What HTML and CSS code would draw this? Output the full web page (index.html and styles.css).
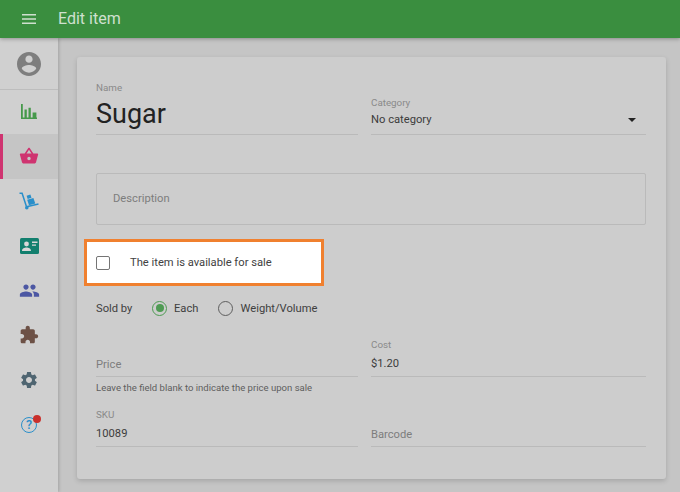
FILE: index.html
```html
<!DOCTYPE html>
<html lang="en">
<head>
<meta charset="utf-8">
<title>Edit item</title>
<link rel="stylesheet" href="styles.css">
</head>
<body>
<div class="app">
  <header class="topbar">
    <svg class="menu-icon" viewBox="0 0 14 10" width="14" height="10"><path d="M0 0h14v1.600H0zM0 4.200h14v1.600H0zM0 8.400h14V10H0z"/></svg>
    <h1 class="title">Edit item</h1>
  </header>
  <div class="content">
    <nav class="sidebar">
      <div class="avatar">
        <svg viewBox="2 2 20 20" width="24" height="24"><path fill="#7e7e7e" d="M12 2C6.480 2 2 6.480 2 12s4.480 10 10 10 10-4.480 10-10S17.520 2 12 2zm0 3c1.660 0 3 1.340 3 3s-1.340 3-3 3-3-1.340-3-3 1.340-3 3-3zm0 14.200c-2.500 0-4.710-1.280-6-3.220.03-1.990 4-3.080 6-3.080 1.990 0 5.970 1.090 6 3.080-1.290 1.940-3.500 3.220-6 3.220z"/></svg>
      </div>
      <div class="nav-item first">
        <svg viewBox="0 0 16 16" width="16" height="16"><path fill="#46994b" d="M0 0h1.800v13.600H3.500V5.500h2.300v8.100H7.500V3.800h2.300v9.800h1.800V8.500h3.800v5.100h.6V15H0z"/></svg>
      </div>
      <div class="nav-item active">
        <svg viewBox="0 0 24 24" width="20" height="20"><path fill="#cf3470" d="M17.210 9l-4.380-6.560c-.19-.28-.51-.42-.83-.42-.32 0-.64.14-.83.43L6.790 9H2c-.55 0-1 .45-1 1 0 .09.01.18.04.27l2.540 9.270c.23.84 1 1.460 1.920 1.460h13c.92 0 1.690-.62 1.930-1.460l2.540-9.270L23 10c0-.55-.45-1-1-1h-4.790zM9 9l3-4.400L15 9H9zm3 8c-1.100 0-2-.9-2-2s.9-2 2-2 2 .9 2 2-.9 2-2 2z"/></svg>
      </div>
      <div class="nav-item">
        <svg viewBox="0 0 20 18" width="20" height="18"><g fill="none" stroke="#2a8fca" stroke-width="1.500"><path d="M0.500 1.200h2.600L7.500 14.800"/><path d="M7.500 14.800L19.500 12"/></g><path fill="#2a8fca" d="M8.200 7.800l6.200-1.900 1.900 5.600-6.300 1.700zM7.600 3.800l3.800-1.200 1.100 3.200-3.800 1.200z"/><circle cx="7.800" cy="15.800" r="1.800" fill="#2a8fca"/></svg>
      </div>
      <div class="nav-item">
        <svg viewBox="0 0 19 16" width="19" height="16"><rect width="19" height="16" rx="1.500" fill="#127f6e"/><circle cx="6.500" cy="6" r="2.400" fill="#d8d8d8"/><path fill="#d8d8d8" d="M2 13c0-2.500 2.500-3.400 4.500-3.400S11 10.500 11 13zM12 3.500h5.500v1.500H12zM12 6.500h4v1.300h-4z"/></svg>
      </div>
      <div class="nav-item">
        <svg viewBox="0 0 24 24" width="21" height="21"><path fill="#4c57a3" d="M16 11c1.660 0 2.990-1.340 2.990-3S17.660 5 16 5c-1.660 0-3 1.340-3 3s1.340 3 3 3zm-8 0c1.660 0 2.990-1.340 2.990-3S9.660 5 8 5C6.340 5 5 6.340 5 8s1.340 3 3 3zm0 2c-2.330 0-7 1.170-7 3.500V19h14v-2.500c0-2.330-4.670-3.500-7-3.500zm8 0c-.29 0-.62.02-.97.05 1.160.84 1.970 1.970 1.970 3.450V19h6v-2.500c0-2.330-4.670-3.500-7-3.500z"/></svg>
      </div>
      <div class="nav-item">
        <svg viewBox="0 0 24 24" width="20" height="20"><path fill="#6d5146" d="M20.500 11H19V7c0-1.100-.9-2-2-2h-4V3.500C13 2.120 11.880 1 10.500 1S8 2.120 8 3.500V5H4c-1.100 0-1.990.9-1.990 2v3.800H3.500c1.490 0 2.700 1.210 2.700 2.700s-1.210 2.700-2.700 2.700H2V20c0 1.100.9 2 2 2h3.800v-1.500c0-1.490 1.210-2.700 2.700-2.700 1.490 0 2.700 1.210 2.700 2.700V22H17c1.100 0 2-.9 2-2v-4h1.500c1.380 0 2.500-1.120 2.500-2.500S21.880 11 20.500 11z"/></svg>
      </div>
      <div class="nav-item">
        <svg viewBox="0 0 24 24" width="20" height="20"><path fill="#4f6571" d="M19.140 12.940c.04-.3.06-.61.06-.94 0-.32-.02-.64-.07-.94l2.030-1.580c.18-.14.23-.41.12-.61l-1.920-3.320c-.12-.22-.37-.29-.59-.22l-2.390.96c-.5-.38-1.030-.7-1.620-.94l-.36-2.540c-.04-.24-.24-.41-.48-.41h-3.840c-.24 0-.43.17-.47.41l-.36 2.540c-.59.24-1.130.57-1.620.94l-2.390-.96c-.22-.08-.47 0-.59.22L2.740 8.870c-.12.21-.08.47.12.61l2.030 1.580c-.05.3-.09.63-.09.94s.02.64.07.94l-2.030 1.580c-.18.14-.23.41-.12.61l1.920 3.320c.12.22.37.29.59.22l2.390-.96c.5.38 1.030.7 1.620.94l.36 2.540c.05.24.24.41.48.41h3.840c.24 0 .44-.17.47-.41l.36-2.540c.59-.24 1.130-.56 1.620-.94l2.390.96c.22.08.47 0 .59-.22l1.920-3.320c.12-.22.07-.47-.12-.61l-2.010-1.580zM12 15.600c-1.980 0-3.600-1.620-3.600-3.600s1.620-3.600 3.600-3.600 3.600 1.620 3.600 3.600-1.620 3.600-3.600 3.600z"/></svg>
      </div>
      <div class="nav-item">
        <span class="help">?<span class="help-dot"></span></span>
      </div>
    </nav>
    <main class="main">
      <form class="card">
        <div class="row row-top">
          <div class="field">
            <span class="label">Name</span>
            <span class="value-big">Sugar</span>
          </div>
          <div class="field">
            <span class="label">Category</span>
            <span class="value select">No category<i class="caret"></i></span>
          </div>
        </div>
        <div class="description">Description</div>
        <div class="highlight">
          <span class="checkbox"></span>
          <span class="check-label">The item is available for sale</span>
        </div>
        <div class="sold-by">
          <span class="sold-label">Sold by</span>
          <span class="radio checked"></span>
          <span class="radio-label">Each</span>
          <span class="radio"></span>
          <span class="radio-label">Weight/Volume</span>
        </div>
        <div class="row row-price">
          <div class="field">
            <span class="value placeholder">Price</span>
          </div>
          <div class="field">
            <span class="label">Cost</span>
            <span class="value">$1.20</span>
          </div>
        </div>
        <p class="hint">Leave the field blank to indicate the price upon sale</p>
        <div class="row row-sku">
          <div class="field">
            <span class="label">SKU</span>
            <span class="value">10089</span>
          </div>
          <div class="field">
            <span class="value placeholder">Barcode</span>
          </div>
        </div>
      </form>
    </main>
  </div>
</div>
</body>
</html>
```
FILE: styles.css
```css
* { box-sizing: border-box; }
html, body { margin: 0; height: 100%; }
body { font-family: Roboto, "Liberation Sans", sans-serif; overflow: hidden; background: #c5c5c5; }
.app { width: 680px; height: 492px; display: flex; flex-direction: column; }
.topbar { height: 38px; flex: none; background: #3a8e3f; display: flex; align-items: center; padding-left: 22px; box-shadow: 0 1px 4px rgba(0,0,0,.3); position: relative; z-index: 2; }
.menu-icon { fill: #cfe0cf; margin-right: 22px; }
.title { margin: 0 0 2px; font-size: 16px; font-weight: 400; color: #cfe0cf; }
.content { flex: 1; display: flex; min-height: 0; }
.sidebar { width: 58px; flex: none; background: #d0d0d0; box-shadow: 1px 0 3px rgba(0,0,0,.18); position: relative; z-index: 1; }
.avatar { height: 52px; display: flex; align-items: center; justify-content: center; border-bottom: 1px solid #bdbdbd; }
.nav-item { height: 44.7px; display: flex; align-items: center; justify-content: center; }
.nav-item.first { height: 44px; }
.nav-item.active { background: #c5c5c5; border-left: 3px solid #cf3470; padding-right: 3px; }
.help { position: relative; width: 16px; height: 16px; margin-top: 2px; border: 1.500px solid #2a8fca; border-radius: 50%; color: #2a8fca; font-size: 12.500px; font-weight: 500; line-height: 13px; text-align: center; }
.help-dot { position: absolute; top: -3.500px; right: -4.500px; width: 8px; height: 8px; border-radius: 50%; background: #c9302c; }
.main { flex: 1; padding: 19px 14px 13px 19px; }
.card { height: 422px; background: #cdcdcd; border-radius: 3px; box-shadow: 0 2px 5px rgba(0,0,0,.16); padding: 0 20px 0 19px; }
.row { display: grid; grid-template-columns: 262px 275px; column-gap: 13px; align-items: end; }
.row-top { padding-top: 23px; height: 78px; }
.row-price { margin-top: 16px; height: 41px; }
.row-sku { margin-top: 13px; height: 40px; }
.field { display: flex; flex-direction: column; border-bottom: 1px solid #bababa; }
.label { font-size: 9.800px; line-height: 13px; color: #8a8a8a; }
.value { font-size: 11.200px; line-height: 25px; height: 25px; color: #3c3c3c; }
.value-big { font-size: 27px; line-height: 40px; color: #222; }
.placeholder { color: #7d7d7d; line-height: 27px; }
.select { display: flex; align-items: center; justify-content: space-between; padding-right: 10px; line-height: 20px; padding-bottom: 3px; }
.caret { width: 0; height: 0; border: 4px solid transparent; border-top: 4px solid #222; border-bottom: 0; }
.description { margin-top: 38px; height: 52px; border: 1px solid #bababa; border-radius: 2px; padding-left: 16px; font-size: 11.200px; line-height: 50px; color: #7d7d7d; width: 550px; }
.highlight { margin: 14px 0 0 -12px; width: 240px; height: 47px; background: #fff; border: 3px solid #f0802f; display: flex; align-items: center; padding-left: 9px; }
.checkbox { width: 14px; height: 14px; border: 1px solid #757575; border-radius: 2px; margin-right: 20px; }
.check-label { font-size: 11.200px; color: #424242; }
.sold-by { margin-top: 10px; height: 24px; display: flex; align-items: center; font-size: 11.200px; color: #3f3f3f; }
.sold-label { width: 56px; }
.radio { width: 15px; height: 15px; border: 1px solid #5e5e5e; border-radius: 50%; margin-right: 7px; display: flex; align-items: center; justify-content: center; }
.radio.checked { border-color: #4e9b53; }
.radio.checked::after { content: ""; width: 8px; height: 8px; border-radius: 50%; background: #4e9b53; }
.radio-label { margin-right: 20px; }
.hint { margin: 5px 0 0; font-size: 9.550px; line-height: 12px; color: #5e5e5e; }
```
